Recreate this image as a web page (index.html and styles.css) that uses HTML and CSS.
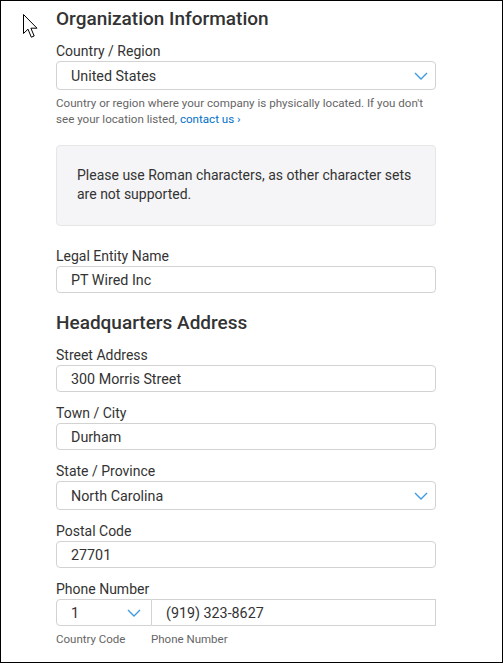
FILE: index.html
```html
<!DOCTYPE html>
<html lang="en">
<head>
<meta charset="utf-8">
<title>Organization Information</title>
<link rel="stylesheet" href="styles.css">
</head>
<body>
<div class="frame">
  <svg class="cursor" width="17" height="26" viewBox="0 0 17 26" aria-hidden="true">
    <path d="M0.5 0.5 L0.5 19.5 L5 15.2 L8.3 23.2 L11.2 22 L7.9 14.2 L14 14.2 Z" fill="#fff" stroke="#000" stroke-width="1" stroke-linejoin="miter"/>
  </svg>
  <main class="form">
    <h2 class="heading">Organization Information</h2>
    <div class="field">
      <div class="label">Country / Region</div>
      <div class="control select">
        <span class="value">United States</span>
        <svg class="chev" width="14" height="8" viewBox="0 0 14 8"><path d="M1 1 L7 7 L13 1" fill="none" stroke="#3e9be0" stroke-width="1.4"/></svg>
      </div>
      <p class="help">Country or region where your company is physically located. If you don't see your location listed, <a class="link" href="#">contact us ›</a></p>
    </div>
    <div class="notice">Please use Roman characters, as other character sets are not supported.</div>
    <div class="field">
      <div class="label">Legal Entity Name</div>
      <div class="control"><span class="value">PT Wired Inc</span></div>
    </div>
    <h2 class="heading sub">Headquarters Address</h2>
    <div class="field">
      <div class="label">Street Address</div>
      <div class="control"><span class="value">300 Morris Street</span></div>
    </div>
    <div class="field">
      <div class="label">Town / City</div>
      <div class="control"><span class="value">Durham</span></div>
    </div>
    <div class="field">
      <div class="label">State / Province</div>
      <div class="control select">
        <span class="value">North Carolina</span>
        <svg class="chev" width="14" height="8" viewBox="0 0 14 8"><path d="M1 1 L7 7 L13 1" fill="none" stroke="#3e9be0" stroke-width="1.4"/></svg>
      </div>
    </div>
    <div class="field">
      <div class="label">Postal Code</div>
      <div class="control"><span class="value">27701</span></div>
    </div>
    <div class="field">
      <div class="label">Phone Number</div>
      <div class="phone">
        <div class="control code">
          <span class="value">1</span>
          <svg class="chev" width="14" height="8" viewBox="0 0 14 8"><path d="M1 1 L7 7 L13 1" fill="none" stroke="#3e9be0" stroke-width="1.4"/></svg>
        </div>
        <div class="control number"><span class="value">(919) 323-8627</span></div>
      </div>
      <div class="sublabels">
        <span class="sub-code">Country Code</span>
        <span class="sub-number">Phone Number</span>
      </div>
    </div>
  </main>
</div>
</body>
</html>
```
FILE: styles.css
```css
* { box-sizing: border-box; }
html, body { margin: 0; padding: 0; background: #fff; }
body {
  font-family: Roboto, "Liberation Sans", Arial, sans-serif;
  color: #333;
}
.frame {
  position: relative;
  width: 503px;
  height: 663px;
  border: 1px solid #000;
  overflow: hidden;
}
.cursor {
  position: absolute;
  left: 22px;
  top: 13px;
}
.form {
  width: 380px;
  margin-left: 55px;
  padding-top: 6px;
}
.heading {
  margin: 0 0 11px;
  font-size: 19px;
  line-height: 24px;
  font-weight: 500;
  color: #333;
}
.heading.sub { margin: 18px 0 11px; }
.field { margin-bottom: 12px; }
.label {
  font-size: 14px;
  line-height: 18px;
  margin-bottom: 1px;
  color: #333;
}
.control {
  height: 27px;
  border: 1px solid #d2d2d2;
  border-radius: 4px;
  display: flex;
  align-items: center;
  padding: 0 7px 0 14px;
  font-size: 14.3px;
  color: #333;
}
.control.select { height: 29px; }
.value { flex: 1; }
.chev { flex: none; }
.help {
  margin: 5px 0 0;
  font-size: 11.6px;
  line-height: 16px;
  color: #666;
}
.link { color: #0070c9; text-decoration: none; white-space: nowrap; }
.notice {
  margin: 18px 0 21px;
  background: #f5f5f7;
  border: 1px solid #e6e6e6;
  border-radius: 4px;
  padding: 20px 20px 21px;
  font-size: 14px;
  line-height: 19px;
  color: #333;
}
.phone { display: flex; }
.phone .control { border-radius: 0; }
.phone .code {
  width: 96px;
  border-radius: 4px 0 0 4px;
  padding-right: 10px;
}
.phone .number {
  flex: 1;
  border-left: none;
}
.sublabels {
  display: flex;
  margin-top: 5px;
  font-size: 11.5px;
  line-height: 16px;
  color: #666;
}
.sub-code { width: 95px; }
```
